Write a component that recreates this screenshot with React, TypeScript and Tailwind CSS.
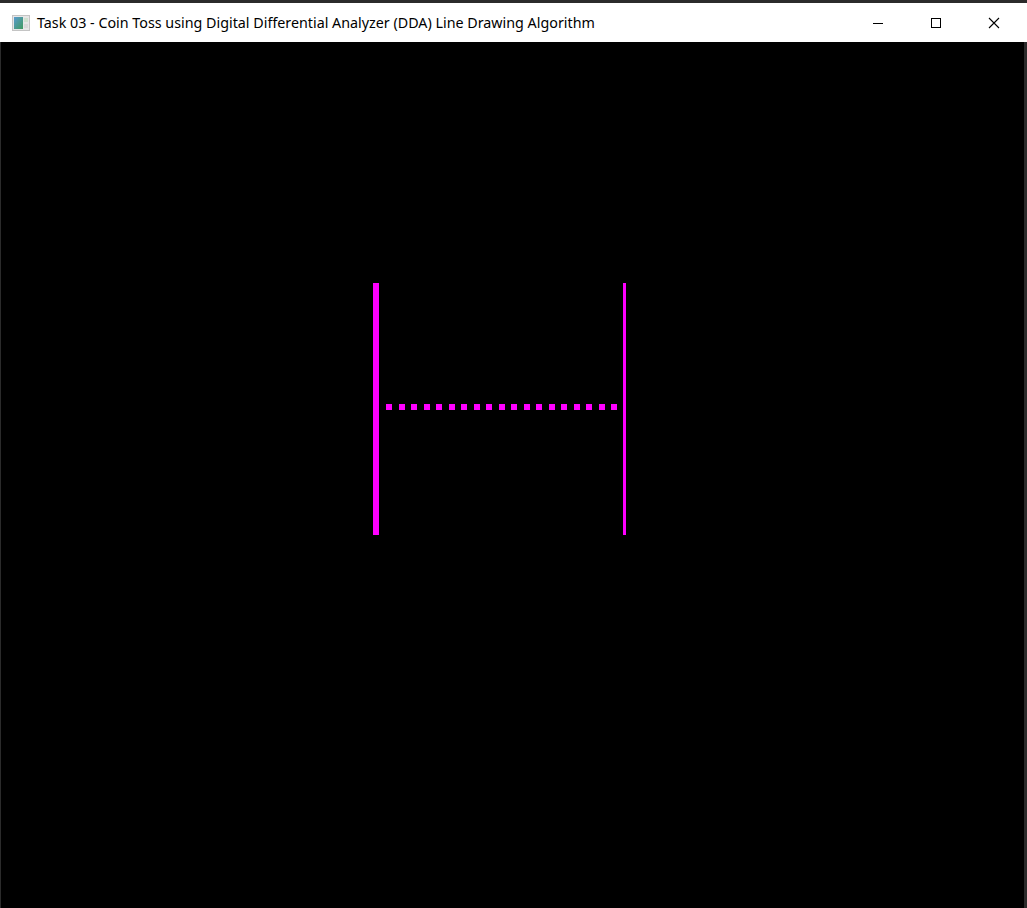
const DOTS = Array.from({ length: 19 }, (_, i) => 385 + i * 12.5);

const App = () => {
    return (
        <div className="flex h-[908px] w-[1027px] flex-col overflow-hidden bg-[#2b2b2b]">
            <div className="mt-[3px] flex h-[39px] items-center bg-white pl-[12px] pr-[4px]">
                <svg width="18" height="16" viewBox="0 0 18 16">
                    <rect x="0.5" y="0.5" width="17" height="15" fill="#e6e6e6" stroke="#c4c4c4" />
                    <defs>
                        <linearGradient id="g" x1="0" y1="0" x2="1" y2="1">
                            <stop offset="0" stopColor="#5a9bd0" />
                            <stop offset="1" stopColor="#3f9a5e" />
                        </linearGradient>
                    </defs>
                    <rect x="2" y="2" width="9" height="12" fill="url(#g)" />
                    <rect x="12" y="3" width="4" height="4" fill="#cfe0cf" />
                    <rect x="12" y="9" width="4" height="4" fill="#d8d8d8" />
                </svg>
                <span className="ml-[7px] font-['Noto_Sans',sans-serif] text-[14.3px] text-black">
                    Task 03 - Coin Toss using Digital Differential Analyzer (DDA) Line Drawing Algorithm
                </span>
                <div className="ml-auto flex h-full">
                    <div className="flex w-[58px] items-center justify-center">
                        <svg width="10" height="10" viewBox="0 0 10 10">
                            <rect x="0" y="5" width="10" height="1" fill="#000" />
                        </svg>
                    </div>
                    <div className="flex w-[58px] items-center justify-center">
                        <svg width="10" height="10" viewBox="0 0 10 10">
                            <rect x="0.5" y="0.5" width="9" height="9" fill="none" stroke="#000" />
                        </svg>
                    </div>
                    <div className="flex w-[58px] items-center justify-center">
                        <svg width="12" height="12" viewBox="0 0 12 12">
                            <path d="M1 1 L11 11 M11 1 L1 11" stroke="#000" strokeWidth="1.1" />
                        </svg>
                    </div>
                </div>
            </div>
            <div className="ml-[1px] mr-[3px] flex-1 bg-black">
                <svg width="1023" height="866" viewBox="0 0 1023 866">
                    <rect x="372" y="241" width="6" height="252" fill="#ff00ff" />
                    <rect x="622" y="241" width="3" height="252" fill="#ff00ff" />
                    {DOTS.map((x) => (
                        <rect key={x} x={Math.round(x)} y="362" width="6" height="6" fill="#ff00ff" />
                    ))}
                </svg>
            </div>
        </div>
    );
};

export default App;
